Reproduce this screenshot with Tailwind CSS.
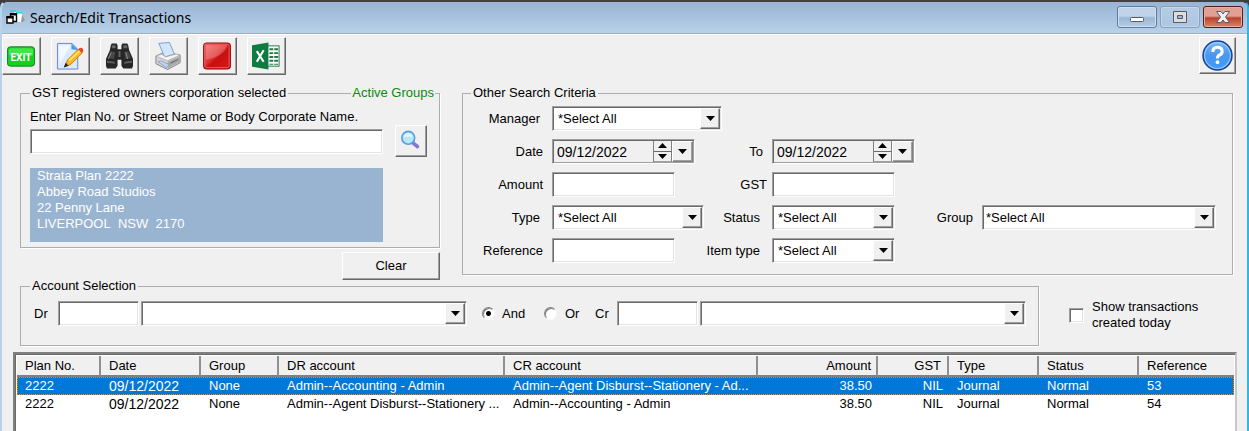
<!DOCTYPE html>
<html lang="en">

<head>
    <meta charset="UTF-8">
    <meta name="viewport" content="width=device-width, initial-scale=1.0">
    <title>Search/Edit Transactions</title>
    <script src="https://cdn.jsdelivr.net/npm/@tailwindcss/browser@4"></script>
</head>

<body class="bg-[#3c3c3c]">
    <div class="h-screen overflow-hidden flex flex-col bg-[#f0f0f0] rounded-t-lg border-t-2 border-t-[#45403f] border-l-2 border-l-[#b9d1ea] border-r-2 border-r-[#35b5e0] font-['Liberation_Sans',sans-serif] text-[13px] leading-4 text-black">
        <!-- title bar -->
        <header class="flex items-start h-8 shrink-0 pl-1 pr-1 bg-linear-to-b from-[#98b4d2] to-[#b9d1ea] border-b border-b-[#a5adb6]">
            <svg class="w-5 h-4 mt-2" viewBox="0 0 20 16">
                <path d="M8 2h5l3 2v8H9z" fill="#fff" />
                <path d="M4 0.500h6v1.500H4zM10 2h6v1.500h-6z" fill="#1fd6e2" />
                <path d="M16 5l3 5-2 2h-2z" fill="#9a9a9a" />
                <path d="M4.500 4h6v7.500h-6z" fill="#fff" stroke="#000" stroke-width="1.400" />
                <path d="M1 7h6v6H1z" fill="#fff" stroke="#000" stroke-width="1.400" />
                <path d="M0.500 6h7v2.500h-7zM4 3h7v2.500H4z" fill="#000" />
            </svg>
            <h1 class="mt-[6px] ml-1 flex-1 font-['Noto_Sans'] text-[14px] leading-5">Search/Edit Transactions</h1>
            <div class="flex gap-[3px] mt-1">
                <button aria-label="Minimize" class="w-10 h-[22px] flex items-center justify-center rounded-[3px] border border-[#5f7c9c] bg-linear-to-b from-[#c0d3e8] from-45% via-[#9bb7d5] via-55% to-[#b5cde6] shadow-[inset_0_0_0_1px_#d0dfef]">
                    <svg class="w-4 h-4" viewBox="0 0 16 16"><rect x="1.500" y="8.500" width="13" height="4" rx="1" fill="#fff" stroke="#555b66" /></svg>
                </button>
                <button aria-label="Restore" class="w-10 h-[22px] flex items-center justify-center rounded-[3px] border border-[#86a2c0] bg-linear-to-b from-[#b5cbe3] to-[#adc7e2] shadow-[inset_0_0_0_1px_#c5d7ea]">
                    <svg class="w-4 h-4" viewBox="0 0 16 16">
                        <path d="M1.500 2.500h13v11h-13z" fill="#ddd" stroke="#555b66" />
                        <path d="M5.500 6.500h5v3h-5z" fill="#9bb7d5" stroke="#555b66" />
                    </svg>
                </button>
                <button aria-label="Close" class="w-10 h-[22px] flex items-center justify-center rounded-[3px] border border-[#5b1a1a] bg-linear-to-b from-[#e0a093] from-45% via-[#b93f2b] via-55% to-[#d8876a] shadow-[inset_0_0_0_1px_#e5aea0]">
                    <svg class="w-4 h-4" viewBox="0 0 16 16">
                        <path d="M1.500 2.500h4.500l2 2.500 2-2.500h4.500L10.500 8l4 5.500H10L8 11l-2 2.500H1.500L5.500 8z" fill="#f0f0f0" stroke="#5a5a66" />
                    </svg>
                </button>
            </div>
        </header>

        <!-- toolbar -->
        <nav class="flex gap-[10px] pr-[11px] pt-[2px] shrink-0 border-t border-t-white">
            <button aria-label="Exit" class="w-[39px] h-[38px] p-1 border border-t-white border-l-white border-r-[#696969] border-b-[#696969] shadow-[inset_-1px_-1px_0_#a0a0a0]">
                <svg class="w-full h-full" viewBox="0 0 30 28">
                    <rect x="0.500" y="4.500" width="28" height="20" rx="3" fill="#12d024" stroke="#158020" />
                    <rect x="2" y="6" width="25" height="8" rx="2" fill="#41e34e" />
                    <text x="14.500" y="19" text-anchor="middle" font-family="Roboto" font-size="10.500" font-weight="700" fill="#fff">EXIT</text>
                </svg>
            </button>
            <button aria-label="Edit" class="w-[39px] h-[38px] p-1 border border-t-white border-l-white border-r-[#696969] border-b-[#696969] shadow-[inset_-1px_-1px_0_#a0a0a0]">
                <svg class="w-full h-full" viewBox="0 0 30 28">
                    <path d="M1.500 1h15l6 6v20.500h-21z" fill="#d9eaff" stroke="#6b87cf" />
                    <path d="M3 3h12l-11 19z" fill="#f3f8ff" />
                    <path d="M16 1l7 7-7-1z" fill="#4a9be8" />
                    <path d="M9 25l3-7L23 7l4 4-12 12z" fill="#ffb515" stroke="#c98310" />
                    <path d="M13 18L24 8l1.500 1L14 20z" fill="#ffe26a" />
                    <path d="M8 26l2-5 3 3z" fill="#222" />
                    <path d="M23 7q3-3 5 0 1 2-1 4z" fill="#e8442f" />
                </svg>
            </button>
            <button aria-label="Search" class="w-[39px] h-[38px] p-1 border border-t-white border-l-white border-r-[#696969] border-b-[#696969] shadow-[inset_-1px_-1px_0_#a0a0a0]">
                <svg class="w-full h-full" viewBox="0 0 30 28">
                    <path d="M6 3l1-2h5l1 2v4h4V3l1-2h5l1 2 1 5 4 9v7l-1 3h-9l-2-3v-6h-4v6l-2 3H2l-1-3v-7l4-9z" fill="#262626" />
                    <path d="M7 3h4v3H7zM19 3h4v3h-4zM14 9h2v6h-2z" fill="#666" />
                    <path d="M6 9l5 1-2 7-6-1zM24 9l-4 1 1 7 6-1z" fill="#484848" />
                    <path d="M2 19l8 1v2l-8-1zM28 19l-8 1v2l8-1z" fill="#5d5d5d" />
                    <path d="M6 10h1l-3 7H3zM21 10h1l2 7h-1z" fill="#8a8a8a" />
                </svg>
            </button>
            <button aria-label="Print" class="w-[39px] h-[38px] p-1 border border-t-white border-l-white border-r-[#696969] border-b-[#696969] shadow-[inset_-1px_-1px_0_#a0a0a0]">
                <svg class="w-full h-full" viewBox="0 0 30 28">
                    <path d="M2 14l9-4 16 3v8l-13 7-12-6z" fill="#d4d4d4" stroke="#858585" />
                    <path d="M5 1l11-1 5 12-10 3z" fill="#d3e6ff" stroke="#7a9bd4" />
                    <path d="M2 14l6-2 4 3 11-3 4 1-13 6z" fill="#f4f4f4" stroke="#a0a0a0" stroke-width="0.700" />
                    <path d="M14 20l13-6v6l-13 7z" fill="#aaa" />
                    <path d="M4 20l3-1 9 4-3 3z" fill="#b9d4f4" stroke="#7891ad" stroke-width="0.700" />
                    <path d="M17 21l8-4v1l-8 4z" fill="#555" />
                </svg>
            </button>
            <button aria-label="Stop" class="w-[39px] h-[38px] p-1 border border-t-white border-l-white border-r-[#696969] border-b-[#696969] shadow-[inset_-1px_-1px_0_#a0a0a0]">
                <svg class="w-full h-full" viewBox="0 0 30 28">
                    <defs>
                        <linearGradient id="red" x1="0" y1="0" x2="1" y2="1">
                            <stop offset="0" stop-color="#f06a6a" />
                            <stop offset="0.450" stop-color="#e03030" />
                            <stop offset="0.550" stop-color="#c81010" />
                            <stop offset="1" stop-color="#d81818" />
                        </linearGradient>
                    </defs>
                    <rect x="0.500" y="0.500" width="28" height="27" rx="3" fill="url(#red)" stroke="#8e1414" />
                    <rect x="2" y="2" width="25" height="24" rx="2" fill="none" stroke="#e85c5c" />
                    <path d="M3 3h22q-2 11-22 15z" fill="#fff" opacity="0.220" />
                </svg>
            </button>
            <button aria-label="Export to Excel" class="w-[39px] h-[38px] p-1 border border-t-white border-l-white border-r-[#696969] border-b-[#696969] shadow-[inset_-1px_-1px_0_#a0a0a0]">
                <svg class="w-full h-full" viewBox="0 0 30 28">
                    <rect x="16" y="3.500" width="12" height="21" fill="#fff" stroke="#1d7a45" />
                    <path d="M18 6h4v2h-4zM23 6h4v2h-4zM18 10h4v2h-4zM23 10h4v2h-4zM18 14h4v2h-4zM23 14h4v2h-4zM18 18h4v2h-4zM23 18h4v2h-4zM18 22h4v1h-4zM23 22h4v1h-4z" fill="#1d7a45" />
                    <path d="M0 3l17-3v28L0 25z" fill="#0f7a41" />
                    <path d="M5 9l7 11M12 8L5 20" stroke="#fff" stroke-width="2.200" />
                </svg>
            </button>
            <button aria-label="Help" class="ml-auto w-[37px] h-[37px] p-px border border-t-white border-l-white border-r-[#696969] border-b-[#696969] shadow-[inset_-1px_-1px_0_#a0a0a0]">
                <svg class="w-full h-full" viewBox="0 0 32 32">
                    <defs>
                        <linearGradient id="blue" x1="0" y1="0" x2="0" y2="1">
                            <stop offset="0" stop-color="#7ab8f5" />
                            <stop offset="0.500" stop-color="#4797ee" />
                            <stop offset="1" stop-color="#3f9bfb" />
                        </linearGradient>
                    </defs>
                    <circle cx="16" cy="16" r="14" fill="url(#blue)" stroke="#16429a" stroke-width="1.500" />
                    <circle cx="16" cy="16" r="12.500" fill="none" stroke="#9ccbfa" />
                    <path d="M11.500 12.500q0-4.500 4.500-4.500t4.500 4q0 2.500-2.500 3.500-2 1-2 3.500" fill="none" stroke="#fff" stroke-width="3" />
                    <circle cx="16" cy="22.500" r="1.800" fill="#fff" />
                </svg>
            </button>
        </nav>

        <!-- search criteria -->
        <section class="flex gap-[22px] pl-[18px] pr-[14px] pt-3 shrink-0">
            <div class="w-[420px] flex flex-col items-end">
                <fieldset class="relative w-full h-[161px] pl-[9px] pr-3 border border-[#adadad] shadow-[1px_1px_0_#fff]">
                    <legend class="leading-3 px-[2px]">GST registered owners corporation selected</legend>
                    <a href="#" class="absolute -top-3 right-1 leading-3 px-px bg-[#f0f0f0] text-[#0c8a0c]">Active Groups</a>
                    <label for="plan" class="block pt-[10px]">Enter Plan No. or Street Name or Body Corporate Name.</label>
                    <div class="flex items-center justify-between h-8">
                        <input id="plan" type="text" class="w-[353px] h-[25px] px-1 bg-white border border-t-[#a0a0a0] border-l-[#a0a0a0] border-r-white border-b-white shadow-[inset_1px_1px_0_#696969,inset_-1px_-1px_0_#e3e3e3] outline-none">
                        <button aria-label="Find plan" class="w-8 h-8 p-1 border border-t-white border-l-white border-r-[#696969] border-b-[#696969] shadow-[inset_-1px_-1px_0_#a0a0a0]">
                            <svg class="w-full h-full" viewBox="0 0 24 24">
                                <path d="M14 14l5 4" stroke="#8578d0" stroke-width="4" stroke-linecap="round" />
                                <circle cx="9" cy="8.500" r="7" fill="#b8e6fa" stroke="#5b9be0" stroke-width="1.800" />
                                <path d="M4.500 8q0-4 5-4.500 4 1 4 4-4-1-9 0.500z" fill="#e6f8ff" />
                            </svg>
                        </button>
                    </div>
                    <address class="not-italic w-[353px] h-[74px] mt-[11px] pl-[7px] bg-[#99b4d1] text-white whitespace-pre-line">Strata Plan 2222
                        Abbey Road Studios
                        22 Penny Lane
                        LIVERPOOL&nbsp; NSW&nbsp; 2170</address>
                </fieldset>
                <button class="w-[98px] h-7 mt-1 border border-t-white border-l-white border-r-[#696969] border-b-[#696969] shadow-[inset_-1px_-1px_0_#a0a0a0]">Clear</button>
            </div>

            <fieldset class="flex-1 min-w-0 h-[188px] pl-2 border border-[#adadad] shadow-[1px_1px_0_#fff]">
                <legend class="leading-3 px-[2px]">Other Search Criteria</legend>
                <div class="grid grid-cols-[81px_152px_68px_143px_67px_1fr] auto-rows-[25px] gap-y-2 items-center pt-[7px] pr-4">
                    <label for="manager" class="text-right pr-3">Manager</label>
                    <div class="relative col-span-5 w-[170px]">
                        <select id="manager" class="block appearance-none w-full h-[25px] pl-[5px] bg-white border border-t-[#a0a0a0] border-l-[#a0a0a0] border-r-white border-b-white shadow-[inset_1px_1px_0_#696969,inset_-1px_-1px_0_#e3e3e3] outline-none">
                            <option>*Select All</option>
                        </select>
                        <span class="absolute right-[2px] top-[2px] w-5 h-[21px] flex items-center justify-center bg-[#f0f0f0] border border-t-white border-l-white border-r-[#696969] border-b-[#696969] shadow-[inset_-1px_-1px_0_#a0a0a0] pointer-events-none"><svg class="w-[9px] h-[5px]" viewBox="0 0 9 5"><path d="M0 0h9L4.500 5z" /></svg></span>
                    </div>

                    <label for="date-from" class="text-right pr-[9px]">Date</label>
                    <div class="flex w-[143px] h-[25px] border border-t-[#a0a0a0] border-l-[#a0a0a0] border-r-white border-b-white shadow-[inset_1px_1px_0_#696969,inset_-1px_-1px_0_#a0a0a0] p-px">
                        <input id="date-from" type="text" value="09/12/2022" class="flex-1 min-w-0 pl-[3px] text-[14px] outline-none">
                        <div class="w-[19px] flex flex-col border-l border-l-[#808080]">
                            <button aria-label="Later" class="flex-1 flex items-center justify-center border-b border-b-[#696969] border-r border-r-[#808080]"><svg class="w-[9px] h-[5px]" viewBox="0 0 9 5"><path d="M0 5h9L4.500 0z" /></svg></button>
                            <button aria-label="Earlier" class="flex-1 flex items-center justify-center border-b border-b-[#a0a0a0] border-r border-r-[#808080]"><svg class="w-[9px] h-[5px]" viewBox="0 0 9 5"><path d="M0 0h9L4.500 5z" /></svg></button>
                        </div>
                        <button aria-label="Open calendar" class="w-[21px] flex items-center justify-center border border-t-white border-l-white border-r-[#808080] border-b-[#808080] shadow-[inset_-1px_-1px_0_#a0a0a0]"><svg class="w-[9px] h-[5px]" viewBox="0 0 9 5"><path d="M0 0h9L4.500 5z" /></svg></button>
                    </div>
                    <label for="date-to" class="text-right pr-[9px]">To</label>
                    <div class="flex col-span-3 w-[143px] h-[25px] border border-t-[#a0a0a0] border-l-[#a0a0a0] border-r-white border-b-white shadow-[inset_1px_1px_0_#696969,inset_-1px_-1px_0_#a0a0a0] p-px">
                        <input id="date-to" type="text" value="09/12/2022" class="flex-1 min-w-0 pl-[3px] text-[14px] outline-none">
                        <div class="w-[19px] flex flex-col border-l border-l-[#808080]">
                            <button aria-label="Later" class="flex-1 flex items-center justify-center border-b border-b-[#696969] border-r border-r-[#808080]"><svg class="w-[9px] h-[5px]" viewBox="0 0 9 5"><path d="M0 5h9L4.500 0z" /></svg></button>
                            <button aria-label="Earlier" class="flex-1 flex items-center justify-center border-b border-b-[#a0a0a0] border-r border-r-[#808080]"><svg class="w-[9px] h-[5px]" viewBox="0 0 9 5"><path d="M0 0h9L4.500 5z" /></svg></button>
                        </div>
                        <button aria-label="Open calendar" class="w-[21px] flex items-center justify-center border border-t-white border-l-white border-r-[#808080] border-b-[#808080] shadow-[inset_-1px_-1px_0_#a0a0a0]"><svg class="w-[9px] h-[5px]" viewBox="0 0 9 5"><path d="M0 0h9L4.500 5z" /></svg></button>
                    </div>

                    <label for="amount" class="text-right pr-[9px]">Amount</label>
                    <input id="amount" type="text" class="w-[123px] h-[25px] px-1 bg-white border border-t-[#a0a0a0] border-l-[#a0a0a0] border-r-white border-b-white shadow-[inset_1px_1px_0_#696969,inset_-1px_-1px_0_#e3e3e3] outline-none">
                    <label for="gst" class="text-right pr-[5px]">GST</label>
                    <input id="gst" type="text" class="col-span-3 w-[123px] h-[25px] px-1 bg-white border border-t-[#a0a0a0] border-l-[#a0a0a0] border-r-white border-b-white shadow-[inset_1px_1px_0_#696969,inset_-1px_-1px_0_#e3e3e3] outline-none">

                    <label for="type" class="text-right pr-3">Type</label>
                    <div class="relative">
                        <select id="type" class="block appearance-none w-full h-[25px] pl-[5px] bg-white border border-t-[#a0a0a0] border-l-[#a0a0a0] border-r-white border-b-white shadow-[inset_1px_1px_0_#696969,inset_-1px_-1px_0_#e3e3e3] outline-none">
                            <option>*Select All</option>
                        </select>
                        <span class="absolute right-[2px] top-[2px] w-5 h-[21px] flex items-center justify-center bg-[#f0f0f0] border border-t-white border-l-white border-r-[#696969] border-b-[#696969] shadow-[inset_-1px_-1px_0_#a0a0a0] pointer-events-none"><svg class="w-[9px] h-[5px]" viewBox="0 0 9 5"><path d="M0 0h9L4.500 5z" /></svg></span>
                    </div>
                    <label for="status" class="text-right pr-3">Status</label>
                    <div class="relative w-[123px]">
                        <select id="status" class="block appearance-none w-full h-[25px] pl-[5px] bg-white border border-t-[#a0a0a0] border-l-[#a0a0a0] border-r-white border-b-white shadow-[inset_1px_1px_0_#696969,inset_-1px_-1px_0_#e3e3e3] outline-none">
                            <option>*Select All</option>
                        </select>
                        <span class="absolute right-[2px] top-[2px] w-5 h-[21px] flex items-center justify-center bg-[#f0f0f0] border border-t-white border-l-white border-r-[#696969] border-b-[#696969] shadow-[inset_-1px_-1px_0_#a0a0a0] pointer-events-none"><svg class="w-[9px] h-[5px]" viewBox="0 0 9 5"><path d="M0 0h9L4.500 5z" /></svg></span>
                    </div>
                    <label for="group" class="text-right pr-[9px]">Group</label>
                    <div class="relative">
                        <select id="group" class="block appearance-none w-full h-[25px] pl-[3px] bg-white border border-t-[#a0a0a0] border-l-[#a0a0a0] border-r-white border-b-white shadow-[inset_1px_1px_0_#696969,inset_-1px_-1px_0_#e3e3e3] outline-none">
                            <option>*Select All</option>
                        </select>
                        <span class="absolute right-[2px] top-[2px] w-5 h-[21px] flex items-center justify-center bg-[#f0f0f0] border border-t-white border-l-white border-r-[#696969] border-b-[#696969] shadow-[inset_-1px_-1px_0_#a0a0a0] pointer-events-none"><svg class="w-[9px] h-[5px]" viewBox="0 0 9 5"><path d="M0 0h9L4.500 5z" /></svg></span>
                    </div>

                    <label for="reference" class="text-right pr-[9px]">Reference</label>
                    <input id="reference" type="text" class="w-[123px] h-[25px] px-1 bg-white border border-t-[#a0a0a0] border-l-[#a0a0a0] border-r-white border-b-white shadow-[inset_1px_1px_0_#696969,inset_-1px_-1px_0_#e3e3e3] outline-none">
                    <label for="item-type" class="text-right whitespace-nowrap pr-3">Item type</label>
                    <div class="relative w-[123px]">
                        <select id="item-type" class="block appearance-none w-full h-[25px] pl-[5px] bg-white border border-t-[#a0a0a0] border-l-[#a0a0a0] border-r-white border-b-white shadow-[inset_1px_1px_0_#696969,inset_-1px_-1px_0_#e3e3e3] outline-none">
                            <option>*Select All</option>
                        </select>
                        <span class="absolute right-[2px] top-[2px] w-5 h-[21px] flex items-center justify-center bg-[#f0f0f0] border border-t-white border-l-white border-r-[#696969] border-b-[#696969] shadow-[inset_-1px_-1px_0_#a0a0a0] pointer-events-none"><svg class="w-[9px] h-[5px]" viewBox="0 0 9 5"><path d="M0 0h9L4.500 5z" /></svg></span>
                    </div>
                </div>
            </fieldset>
        </section>

        <!-- accounts -->
        <section class="flex items-center pl-[18px] pr-7 shrink-0">
            <fieldset class="flex-1 min-w-0 h-[66px] pl-[9px] pr-3 border border-[#adadad] shadow-[1px_1px_0_#fff]">
                <legend class="leading-3 px-[2px]">Account Selection</legend>
                <div class="flex items-center gap-[2px] pt-[9px]">
                    <label for="dr" class="w-[26px] pl-1">Dr</label>
                    <input id="dr" type="text" class="w-[81px] h-[25px] px-1 bg-white border border-t-[#a0a0a0] border-l-[#a0a0a0] border-r-white border-b-white shadow-[inset_1px_1px_0_#696969,inset_-1px_-1px_0_#e3e3e3] outline-none">
                    <div class="relative flex-1">
                        <select aria-label="Debit account" class="block appearance-none w-full h-[25px] pl-[5px] bg-white border border-t-[#a0a0a0] border-l-[#a0a0a0] border-r-white border-b-white shadow-[inset_1px_1px_0_#696969,inset_-1px_-1px_0_#e3e3e3] outline-none">
                            <option></option>
                        </select>
                        <span class="absolute right-[2px] top-[2px] w-5 h-[21px] flex items-center justify-center bg-[#f0f0f0] border border-t-white border-l-white border-r-[#696969] border-b-[#696969] shadow-[inset_-1px_-1px_0_#a0a0a0] pointer-events-none"><svg class="w-[9px] h-[5px]" viewBox="0 0 9 5"><path d="M0 0h9L4.500 5z" /></svg></span>
                    </div>
                    <label class="flex items-center gap-[7px] w-[60px] ml-[13px]">
                        <input type="radio" name="operator" checked class="appearance-none w-[13px] h-[13px] rounded-full bg-white border border-t-[#808080] border-l-[#808080] border-r-[#f8f8f8] border-b-[#f8f8f8] shadow-[inset_1px_1px_0_#808080] checked:bg-[radial-gradient(#000_0_2px,#fff_3px)]">
                        And
                    </label>
                    <label class="flex items-center gap-2 w-[49px]">
                        <input type="radio" name="operator" class="appearance-none w-[13px] h-[13px] rounded-full bg-white border border-t-[#808080] border-l-[#808080] border-r-[#f8f8f8] border-b-[#f8f8f8] shadow-[inset_1px_1px_0_#808080] checked:bg-[radial-gradient(#000_0_2px,#fff_3px)]">
                        Or
                    </label>
                    <label for="cr" class="w-[20px]">Cr</label>
                    <input id="cr" type="text" class="w-[81px] h-[25px] px-1 bg-white border border-t-[#a0a0a0] border-l-[#a0a0a0] border-r-white border-b-white shadow-[inset_1px_1px_0_#696969,inset_-1px_-1px_0_#e3e3e3] outline-none">
                    <div class="relative flex-1">
                        <select aria-label="Credit account" class="block appearance-none w-full h-[25px] pl-[5px] bg-white border border-t-[#a0a0a0] border-l-[#a0a0a0] border-r-white border-b-white shadow-[inset_1px_1px_0_#696969,inset_-1px_-1px_0_#e3e3e3] outline-none">
                            <option></option>
                        </select>
                        <span class="absolute right-[2px] top-[2px] w-5 h-[21px] flex items-center justify-center bg-[#f0f0f0] border border-t-white border-l-white border-r-[#696969] border-b-[#696969] shadow-[inset_-1px_-1px_0_#a0a0a0] pointer-events-none"><svg class="w-[9px] h-[5px]" viewBox="0 0 9 5"><path d="M0 0h9L4.500 5z" /></svg></span>
                    </div>
                </div>
            </fieldset>
            <label class="flex items-center gap-2 w-[150px] ml-[30px] pt-1">
                <input type="checkbox" class="appearance-none w-[15px] h-[15px] shrink-0 bg-white border border-t-[#a0a0a0] border-l-[#a0a0a0] border-r-white border-b-white shadow-[inset_1px_1px_0_#696969,inset_-1px_-1px_0_#e3e3e3] checked:bg-black">
                <span>Show transactions<br>created today</span>
            </label>
        </section>

        <!-- transactions -->
        <main class="flex-1 min-h-0 mt-[6px] ml-[11px] mr-[10px] bg-white border-2 border-b-0 border-t-[#808080] border-l-[#808080] border-r-[#c8c8c8] shadow-[inset_1px_1px_0_#696969] pl-[2px] pr-px pt-[2px]">
            <table class="w-full table-fixed border-separate border-spacing-0">
                <thead>
                    <tr class="h-[21px] text-left bg-[#f0f0f0] *:font-normal *:p-0 *:pl-2 *:border-b-2 *:border-b-[#808080] *:border-r-2 *:border-r-[#909090]">
                        <th class="w-[84px]">Plan No.</th>
                        <th class="w-[100px]">Date</th>
                        <th class="w-[78px]">Group</th>
                        <th class="w-[226px]">DR account</th>
                        <th>CR account</th>
                        <th class="w-[120px] text-right pr-[5px]!">Amount</th>
                        <th class="w-[71px] text-right pr-[6px]!">GST</th>
                        <th class="w-[90px]">Type</th>
                        <th class="w-[100px]">Status</th>
                        <th class="w-[95px] border-r-0!">Reference</th>
                    </tr>
                </thead>
                <tbody>
                    <tr class="h-[18px] bg-[#0078d7] text-white outline-1 outline-dotted -outline-offset-1 outline-[#e08a30] *:p-0 *:pl-2 *:whitespace-nowrap">
                        <td>2222</td>
                        <td class="text-[14px]">09/12/2022</td>
                        <td>None</td>
                        <td>Admin--Accounting - Admin</td>
                        <td>Admin--Agent Disburst--Stationery - Ad...</td>
                        <td class="text-right pr-[6px]!">38.50</td>
                        <td class="text-right pr-[6px]!">NIL</td>
                        <td>Journal</td>
                        <td>Normal</td>
                        <td>53</td>
                    </tr>
                    <tr class="h-[18px] *:p-0 *:pl-2 *:whitespace-nowrap">
                        <td>2222</td>
                        <td class="text-[14px]">09/12/2022</td>
                        <td>None</td>
                        <td>Admin--Agent Disburst--Stationery ...</td>
                        <td>Admin--Accounting - Admin</td>
                        <td class="text-right pr-[6px]!">38.50</td>
                        <td class="text-right pr-[6px]!">NIL</td>
                        <td>Journal</td>
                        <td>Normal</td>
                        <td>54</td>
                    </tr>
                </tbody>
            </table>
        </main>
    </div>
</body>

</html>
